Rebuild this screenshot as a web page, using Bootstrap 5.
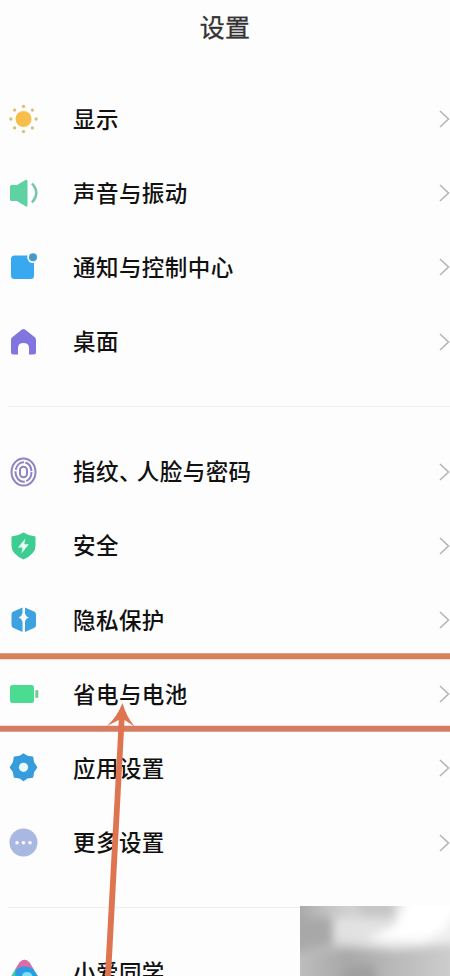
<!DOCTYPE html>
<html lang="zh-CN">
<head>
<meta charset="utf-8">
<meta name="viewport" content="width=device-width, initial-scale=1">
<title>设置</title>
<link href="https://cdn.jsdelivr.net/npm/bootstrap@5.3.0/dist/css/bootstrap.min.css" rel="stylesheet">
<style>
html,body{height:976px;overflow:hidden}
body{background:#fdfdfd;color:#111;font-family:"Noto Sans CJK SC",sans-serif}
.screen{width:450px;height:976px;overflow:hidden}
.title-bar{height:82px;padding-top:8px;font-size:25px;line-height:36px;color:#333;letter-spacing:.2px;-webkit-text-stroke:.3px #333}
.settings .list-group-item{height:74.2px;padding:0 0 0 8px;background:transparent;color:#111}
.glyph{width:32px;height:32px;flex:none;margin-right:33px;overflow:visible}
.label{font-size:22.5px;font-weight:500;letter-spacing:.45px;line-height:32px;white-space:nowrap;padding-bottom:3px}
.tight{letter-spacing:-4.6px}
.chev{width:11px;height:20px;flex:none}
.rule{height:1px;background:#efefef;margin:27.5px 0 27.3px 8px}
.marks{left:0;top:0;pointer-events:none}
.thumb{left:300px;top:906px}
</style>
</head>
<body>
<main class="screen position-relative">
<header class="title-bar text-center">设置</header>
<ul class="list-group list-group-flush settings">
<li class="list-group-item border-0 d-flex align-items-center">
<svg class="glyph" viewBox="0 0 32 32"><circle cx="15.5" cy="16" r="8" fill="#f8be4b"/><g fill="#dcc071"><circle cx="15.5" cy="3.4" r="1.7"/><circle cx="15.5" cy="28.6" r="1.7"/><circle cx="2.9" cy="16" r="1.7"/><circle cx="28.1" cy="16" r="1.7"/><circle cx="6.6" cy="7.1" r="1.7"/><circle cx="24.4" cy="7.1" r="1.7"/><circle cx="6.6" cy="24.9" r="1.7"/><circle cx="24.4" cy="24.9" r="1.7"/></g></svg>
<span class="label">显示</span><svg class="chev ms-auto" viewBox="0 0 11 20"><path d="M1 2l8.5 8L1 18" fill="none" stroke="#b5b5b5" stroke-width="1.6"/></svg></li>
<li class="list-group-item border-0 d-flex align-items-center">
<svg class="glyph" viewBox="0 0 32 32"><path d="M3.5 8H9L17.500 3q2-.8 2 1.3v24q0 2-2 1L9 24H3.500Q2 24 2 22.500V9.500Q2 8 3.500 8z" fill="#5fd1a2"/><path d="M24 6.500Q32.500 15.500 24 25.500" fill="none" stroke="#73c6a7" stroke-width="2.500"/></svg>
<span class="label">声音与振动</span><svg class="chev ms-auto" viewBox="0 0 11 20"><path d="M1 2l8.5 8L1 18" fill="none" stroke="#b5b5b5" stroke-width="1.6"/></svg></li>
<li class="list-group-item border-0 d-flex align-items-center">
<svg class="glyph" viewBox="0 0 32 32"><rect x="3" y="4.500" width="23" height="23.500" rx="3.500" fill="#38a9ee"/><circle cx="25" cy="6.300" r="5.800" fill="#fdfdfd"/><circle cx="25" cy="6.300" r="4" fill="#4599cd"/></svg>
<span class="label">通知与控制中心</span><svg class="chev ms-auto" viewBox="0 0 11 20"><path d="M1 2l8.5 8L1 18" fill="none" stroke="#b5b5b5" stroke-width="1.6"/></svg></li>
<li class="list-group-item border-0 d-flex align-items-center">
<svg class="glyph" viewBox="0 0 32 32"><path d="M14 3.400q1.500-1 3 0L26.500 11Q28 12.200 28 14v12q0 2.500-2.500 2.500H21V22q0-5-5.500-5T10 22v6.500H5.500Q3 28.500 3 26V14q0-1.800 1.500-3z" fill="#8175df"/></svg>
<span class="label">桌面</span><svg class="chev ms-auto" viewBox="0 0 11 20"><path d="M1 2l8.5 8L1 18" fill="none" stroke="#b5b5b5" stroke-width="1.6"/></svg></li>
</ul>
<div class="rule"></div>
<ul class="list-group list-group-flush settings">
<li class="list-group-item border-0 d-flex align-items-center">
<svg class="glyph" viewBox="0 0 32 32"><g fill="none" stroke="#8e82c0"><ellipse cx="15.500" cy="16" rx="12" ry="13.500" stroke-width="2"/><ellipse cx="15.500" cy="16" rx="8" ry="9.700" stroke-width="2" stroke-dasharray="11 1.500 16 1.500 12 1.500"/><rect x="12" y="10.800" width="7" height="10.400" rx="3.500" stroke-width="2"/></g></svg>
<span class="label">指纹<span class="tight">、</span>人脸与密码</span><svg class="chev ms-auto" viewBox="0 0 11 20"><path d="M1 2l8.5 8L1 18" fill="none" stroke="#b5b5b5" stroke-width="1.6"/></svg></li>
<li class="list-group-item border-0 d-flex align-items-center">
<svg class="glyph" viewBox="0 0 32 32"><path d="M15.500 2.500Q21 6 27.500 6.500V16q0 8-12 13.500Q3.500 24 3.500 16V6.500Q10 6 15.500 2.500z" fill="#3dcc91"/><path d="M17.300 8.500L10 17.500h4.500l-1 6 7.300-9.200h-4.500z" fill="#e8fff4"/></svg>
<span class="label">安全</span><svg class="chev ms-auto" viewBox="0 0 11 20"><path d="M1 2l8.5 8L1 18" fill="none" stroke="#b5b5b5" stroke-width="1.6"/></svg></li>
<li class="list-group-item border-0 d-flex align-items-center">
<svg class="glyph" viewBox="0 0 32 32"><path d="M14.500 3.500v5.700q-.7 3.300-4 4.300 3.300 1 4 4.300V28L5 23.700Q3.500 23 3.500 21V10.500q0-2 1.500-2.800zM17 3.500v5.700q.7 3.300 4 4.300-3.300 1-4 4.300V28l9.500-4.300q1.500-.7 1.500-2.700V10.500q0-2-1.500-2.800z" fill="#3da2df"/></svg>
<span class="label">隐私保护</span><svg class="chev ms-auto" viewBox="0 0 11 20"><path d="M1 2l8.5 8L1 18" fill="none" stroke="#b5b5b5" stroke-width="1.6"/></svg></li>
<li class="list-group-item border-0 d-flex align-items-center">
<svg class="glyph" viewBox="0 0 32 32"><rect x="2" y="7" width="24" height="18" rx="2.500" fill="#4bdb91"/><rect x="27.300" y="12" width="3" height="8" rx="1.200" fill="#6bcf9c"/></svg>
<span class="label">省电与电池</span><svg class="chev ms-auto" viewBox="0 0 11 20"><path d="M1 2l8.5 8L1 18" fill="none" stroke="#b5b5b5" stroke-width="1.6"/></svg></li>
<li class="list-group-item border-0 d-flex align-items-center">
<svg class="glyph" viewBox="0 0 32 32"><path d="M15.500 2l3.800 2.600 5.200.7.900 5.200L28.500 15.500l-3.100 4.300-.9 5.200-5.200.7-3.800 2.800-3.800-2.800-5.200-.7-.9-5.200L2.500 15.500l3.100-5 .9-5.200 5.200-.7z" fill="#369cdb" stroke="#369cdb" stroke-width="1.500" stroke-linejoin="round"/><circle cx="15.500" cy="15.300" r="4.600" fill="#e9f9ff"/></svg>
<span class="label">应用设置</span><svg class="chev ms-auto" viewBox="0 0 11 20"><path d="M1 2l8.5 8L1 18" fill="none" stroke="#b5b5b5" stroke-width="1.6"/></svg></li>
<li class="list-group-item border-0 d-flex align-items-center">
<svg class="glyph" viewBox="0 0 32 32"><circle cx="15.500" cy="15.500" r="14" fill="#a9b8e0"/><g fill="#fafaff"><circle cx="9" cy="15.800" r="1.800"/><circle cx="15.500" cy="15.800" r="1.800"/><circle cx="22" cy="15.800" r="1.800"/></g></svg>
<span class="label">更多设置</span><svg class="chev ms-auto" viewBox="0 0 11 20"><path d="M1 2l8.5 8L1 18" fill="none" stroke="#b5b5b5" stroke-width="1.6"/></svg></li>
</ul>
<div class="rule"></div>
<ul class="list-group list-group-flush settings">
<li class="list-group-item border-0 d-flex align-items-center">
<svg class="glyph" viewBox="0 0 32 32"><path d="M11.500 5.500Q16.500 0 21.500 5.500L31 21q2 9-7 9H8q-8-1-6-9z" fill="#45cba8"/><path d="M11.500 5.500Q16.500 0 21.500 5.500L26 13H7z" fill="#e06aa8"/><path d="M8 13q8-7 17-1l6 9q2 9-7 9H14Q5 22 8 13z" fill="#2b9de4"/><path d="M14 20q0-5 5-5 5 0 6 6z" fill="#7fe0ee"/></svg>
<span class="label">小爱同学</span></li>
</ul>
<svg class="marks position-absolute" width="450" height="976" viewBox="0 0 450 976"><path d="M0 656.300H450" stroke="#d98259" stroke-width="6"/><path d="M0 728.800H450" stroke="#d67c60" stroke-width="6"/><path d="M105 976L118.800 720 107 726Q117 717 122.500 703 126 716 134.500 726.500L124.500 720 111 976z" fill="#df7550"/></svg>
<svg class="thumb position-absolute" width="150" height="70" viewBox="0 0 150 70">
<defs><linearGradient id="base" x2="1"><stop stop-color="#aaa"/><stop offset=".22" stop-color="#c8c8c8"/><stop offset=".6" stop-color="#e6e6e6"/><stop offset="1" stop-color="#eee"/></linearGradient><linearGradient id="low" x2="1"><stop stop-color="#c6c6c6"/><stop offset=".35" stop-color="#a8a8a8"/><stop offset=".6" stop-color="#b9b9b9"/><stop offset="1" stop-color="#d4d4d4"/></linearGradient><filter id="soft" x="-20%" y="-40%" width="140%" height="180%"><feGaussianBlur stdDeviation="5"/></filter><clipPath id="edge"><rect width="150" height="70"/></clipPath></defs>
<g clip-path="url(#edge)"><rect width="150" height="70" fill="url(#base)"/><g filter="url(#soft)"><path d="M-20 48L50 42 95 44 170 36V95H-20z" fill="url(#low)"/><path d="M55 -8h40v22H60z" fill="#c6c6c6"/><path d="M-10 12h42v28h-42z" fill="#a8a8a8"/><path d="M35 12h60v24H35z" fill="#e2e2e2"/><path d="M95 20L112-20h60L145 24 125 35 65 34z" fill="#fff"/><path d="M30 90l18-28 24-4 6 12-18 22z" fill="#9f9f9f"/></g></g></svg>
</main>
<script src="https://cdn.jsdelivr.net/npm/bootstrap@5.3.0/dist/js/bootstrap.bundle.min.js"></script>
</body>
</html>
